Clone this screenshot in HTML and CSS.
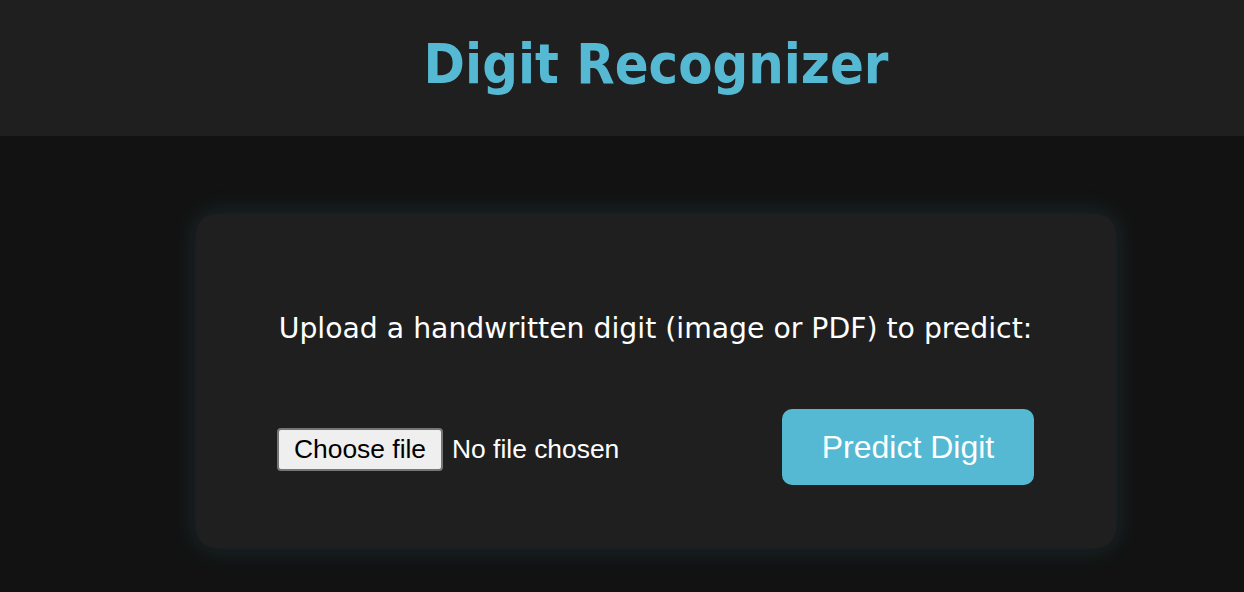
FILE: index.html
```html
<!DOCTYPE html>
<html lang="en">
<head>
<meta charset="utf-8">
<title>Digit Recognizer</title>
<link rel="stylesheet" href="styles.css">
</head>
<body>
<header class="site-header">
  <h1 class="title">Digit Recognizer</h1>
</header>
<main class="main">
  <section class="card">
    <p class="prompt">Upload a handwritten digit (image or PDF) to predict:</p>
    <form class="upload-row">
      <div class="file-field">
        <label class="file-btn">Choose file<input class="file-input" type="file" accept="image/*,application/pdf"></label>
        <span class="file-name">No file chosen</span>
      </div>
      <button class="predict-btn" type="button">Predict Digit</button>
    </form>
  </section>
</main>
</body>
</html>
```
FILE: styles.css
```css
* { box-sizing: border-box; }
html, body { margin: 0; padding: 0; }
body {
  background: #121212;
  color: #ffffff;
  font-family: "DejaVu Sans", Verdana, sans-serif;
  width: 1244px;
  height: 592px;
  overflow: hidden;
}
.site-header {
  background: #1f1f1f;
  height: 136px;
  display: flex;
  align-items: center;
  justify-content: center;
  padding: 0 0 10px 68px;
}
.title {
  margin: 0;
  font-family: "DejaVu Sans", sans-serif;
  font-stretch: condensed;
  font-weight: bold;
  font-size: 55.5px;
  color: #55b9d3;
}
.main {
  padding: 78px 0 0 68px;
  display: flex;
  justify-content: center;
}
.card {
  width: 920px;
  height: 334px;
  background: #1f1f1f;
  border-radius: 20px;
  box-shadow: 0 0 26px rgba(85, 185, 211, 0.16);
  padding: 98px 82px 0 81px;
  display: flex;
  flex-direction: column;
}
.prompt {
  margin: 0;
  text-align: center;
  font-family: "DejaVu Sans", sans-serif;
  font-size: 28.3px;
  line-height: 34px;
}
.upload-row {
  margin-top: 63px;
  display: flex;
  align-items: center;
  justify-content: space-between;
}
.file-field {
  display: flex;
  align-items: center;
  gap: 9px;
  padding-top: 5px;
  font-family: "Liberation Sans", Arial, sans-serif;
  font-size: 26.4px;
}
.file-btn {
  display: inline-block;
  background: #efefef;
  color: #000;
  border: 2px solid #767676;
  border-radius: 4px;
  padding: 4px 15px;
  line-height: 31px;
  cursor: pointer;
}
.file-input { display: none; }
.file-name { color: #ffffff; }
.predict-btn {
  width: 252px;
  height: 76px;
  background: #55b9d3;
  color: #ffffff;
  border: none;
  border-radius: 10px;
  font-family: "Liberation Sans", Arial, sans-serif;
  font-size: 32px;
  cursor: pointer;
}
```
